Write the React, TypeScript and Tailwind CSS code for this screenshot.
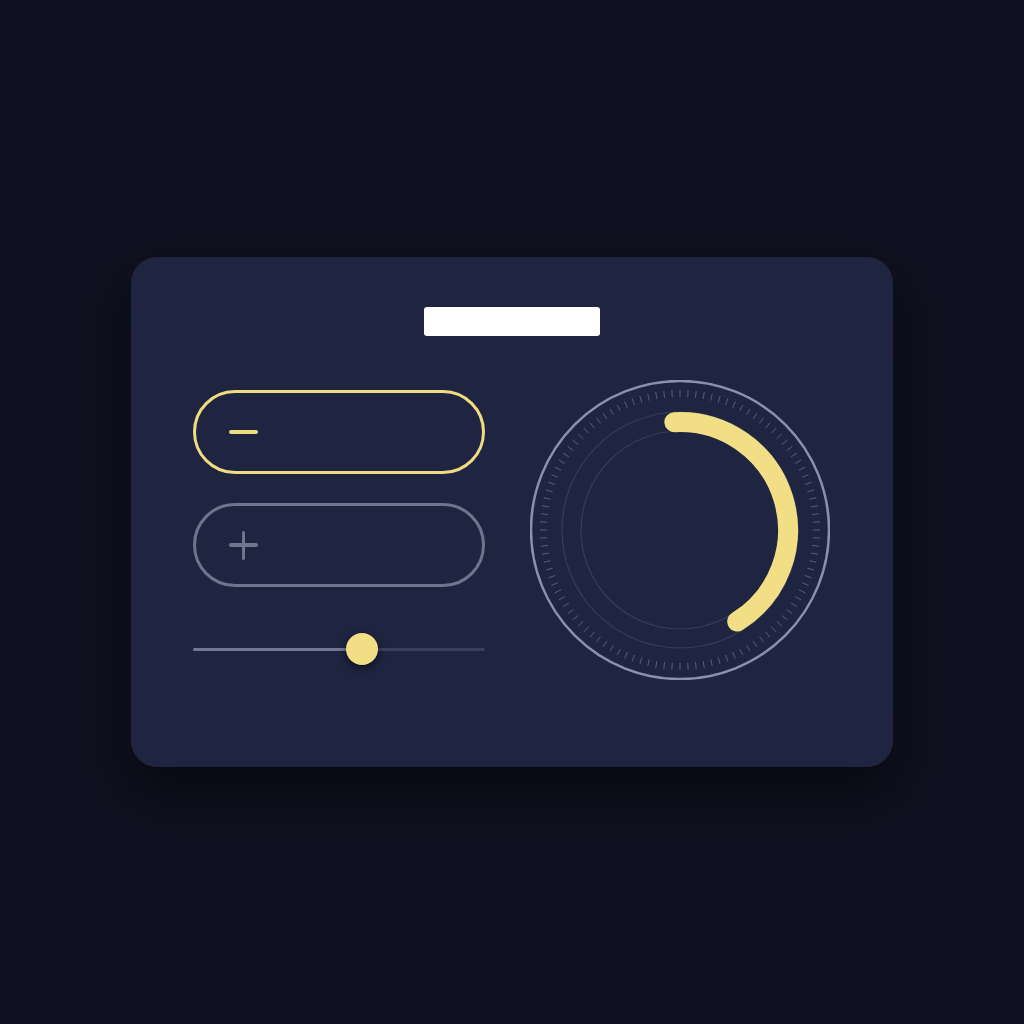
import { useState } from 'react'

const TICKS = 108

function Dial({ value }: { value: number }) {
  const c = 150
  const r = 108
  const start = -3
  const end = start + value * 151
  const pt = (deg: number, rad: number) => {
    const a = ((deg - 90) * Math.PI) / 180
    return [c + rad * Math.cos(a), c + rad * Math.sin(a)]
  }
  const [sx, sy] = pt(start, r)
  const [ex, ey] = pt(end, r)
  const large = end - start > 180 ? 1 : 0

  return (
    <svg width="300" height="300" viewBox="0 0 300 300">
      <circle cx={c} cy={c} r={149} fill="none" stroke="#8d90ad" strokeWidth="2.5" />
      {Array.from({ length: TICKS }).map((_, i) => {
        const deg = (i * 360) / TICKS
        const [x1, y1] = pt(deg, 133)
        const [x2, y2] = pt(deg, 140)
        return <line key={i} x1={x1} y1={y1} x2={x2} y2={y2} stroke="#5a5e7e" strokeWidth="1" />
      })}
      <circle cx={c} cy={c} r={118} fill="none" stroke="#373c5b" strokeWidth="1.2" />
      <circle cx={c} cy={c} r={99} fill="none" stroke="#373c5b" strokeWidth="1.2" />
      <path
        d={`M ${sx} ${sy} A ${r} ${r} 0 ${large} 1 ${ex} ${ey}`}
        fill="none"
        stroke="#f2df85"
        strokeWidth="20"
        strokeLinecap="round"
      />
    </svg>
  )
}

export default function App() {
  const [slider] = useState(0.58)
  const [dial] = useState(1)

  return (
    <div className="min-h-screen w-full bg-[#0f1120] flex items-center justify-center font-['Inter',sans-serif]">
      <div className="w-[762px] h-[510px] rounded-[26px] bg-[#1f2441] shadow-[0_24px_60px_rgba(0,0,0,0.55)] flex flex-col items-center pt-[50px]">
        {/* title placeholder */}
        <div className="w-[176px] h-[29px] rounded-[3px] bg-white" />

        <div className="mt-[44px] w-full flex items-start px-[62px] gap-[45px]">
          {/* controls */}
          <div className="w-[292px] mt-[10px] flex flex-col">
            <button className="h-[84px] w-full rounded-full border-[3px] border-[#f0dc80] flex items-center pl-[33px]">
              <span className="block w-[29px] h-[3.5px] rounded-full bg-[#f0dc80]" />
            </button>
            <button className="mt-[29px] h-[84px] w-full rounded-full border-[3px] border-[#71748f] flex items-center pl-[33px]">
              <span className="relative block w-[29px] h-[29px]">
                <span className="absolute left-0 top-[12.75px] w-[29px] h-[3.5px] rounded-full bg-[#71748f]" />
                <span className="absolute top-0 left-[12.75px] h-[29px] w-[3.5px] rounded-full bg-[#71748f]" />
              </span>
            </button>
            <div className="mt-[46px] relative h-[32px] w-full flex items-center">
              <div className="h-[3px] w-full rounded-full bg-[#3b4060]" />
              <div
                className="absolute left-0 h-[3px] rounded-full bg-[#737794]"
                style={{ width: `${slider * 100}%` }}
              />
              <div
                className="absolute w-[32px] h-[32px] -ml-[16px] rounded-full bg-[#f2df85] shadow-[0_3px_8px_rgba(0,0,0,0.55)]"
                style={{ left: `${slider * 100}%` }}
              />
            </div>
          </div>

          {/* dial */}
          <div className="w-[300px] h-[300px]">
            <Dial value={dial} />
          </div>
        </div>
      </div>
    </div>
  )
}
